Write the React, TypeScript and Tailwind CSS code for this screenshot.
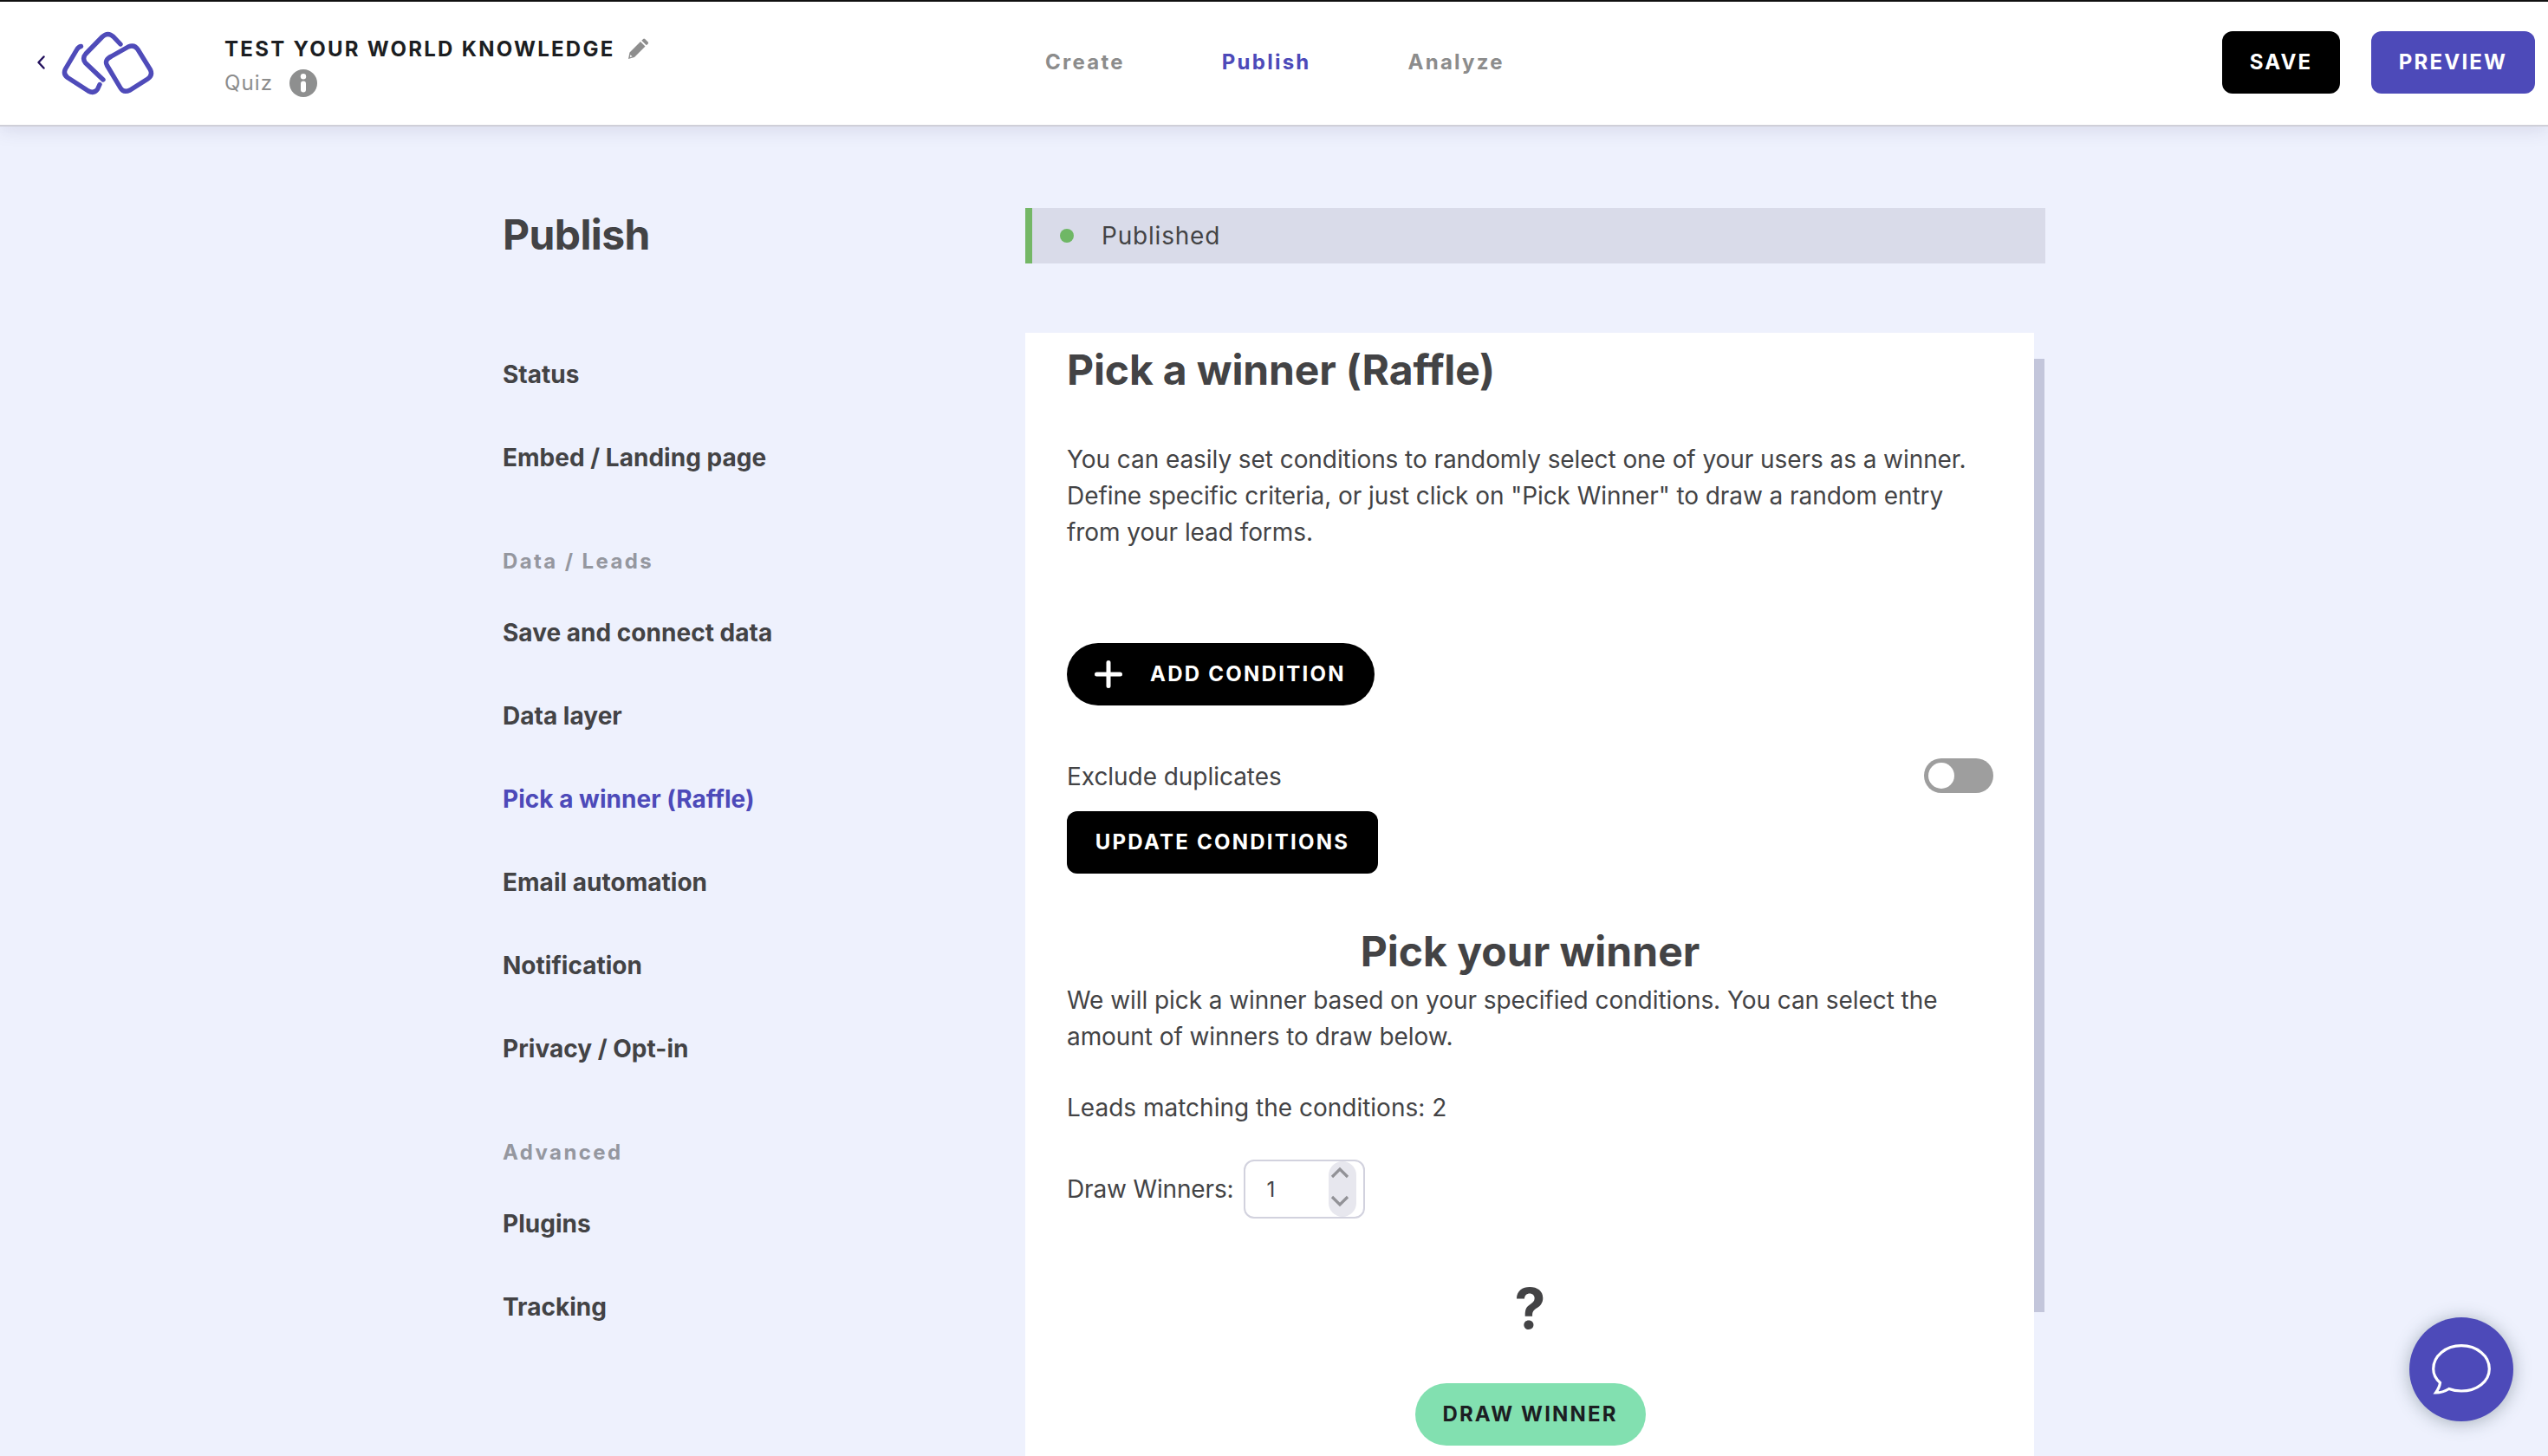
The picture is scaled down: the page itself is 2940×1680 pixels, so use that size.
const navGroups = [
  { title: '', items: ['Status', 'Embed / Landing page'] },
  {
    title: 'Data / Leads',
    items: [
      'Save and connect data',
      'Data layer',
      'Pick a winner (Raffle)',
      'Email automation',
      'Notification',
      'Privacy / Opt-in',
    ],
  },
  { title: 'Advanced', items: ['Plugins', 'Tracking'] },
];

const tabs = ['Create', 'Publish', 'Analyze'];

function Logo() {
  return (
    <svg
      width="108"
      height="76"
      viewBox="0 0 108 76"
      fill="none"
      stroke="#4f4bb9"
      strokeWidth="5.4"
      strokeLinecap="round"
      strokeLinejoin="round"
      className="ml-[19px]"
    >
      <path d="M22.5 17.5 Q19.5 18 17.5 21.5 L4.5 43.5 Q1.5 49.5 7 53.5 L31 69 Q37.5 72.5 41.5 67 L44 61.5" />
      <path d="M68 15 L60 6.5 Q53.5 0.5 47 6.5 L28 26 Q23.5 31 27.5 36.5 L48 56" />
      <path d="M57.5 29 L77 18 Q84 15 88 21 L102.5 44.5 Q105.5 51 99.5 55 L79 68 Q71.5 71.5 68 65.5 L52.5 39.5 Q49 33 57.5 29 Z" />
    </svg>
  );
}

function Header() {
  return (
    <header className="relative z-10 flex h-[146px] items-start border-t-2 border-b-2 border-t-[#111111] border-b-[#cfcfd8] bg-white pl-[43px] pr-[15px] pt-[34px] shadow-[0_4px_20px_rgba(60,60,110,0.13)]">
      <div className="flex w-[216px] shrink-0 items-start">
        <svg width="9" height="16" viewBox="0 0 9 16" className="mt-[28px] shrink-0">
          <path d="M7.5 1.5 L1.5 8 L7.5 14.5" fill="none" stroke="#22105c" strokeWidth="2.4" strokeLinecap="round" strokeLinejoin="round" />
        </svg>
        <Logo />
      </div>
      <div className="w-[947px] shrink-0">
        <div className="flex h-[40px] items-center">
          <h1 className="whitespace-nowrap pt-[2px] text-[24px] font-bold leading-[40px] tracking-[2.28px] text-[#1c1e22]">
            TEST YOUR WORLD KNOWLEDGE
          </h1>
          <svg width="25" height="25" viewBox="0 0 25 25" fill="#8e8e8e" className="ml-[14px]">
            <path d="M2.5 16.5 L15 4 L20.5 9.5 L8 22 L1 24 Z M3.3 19.3 L3 22 L5.6 21.3 Z" fillRule="evenodd" />
            <path d="M16.3 2.7 L18.2 0.9 Q19.2 0.2 20.2 1 L23.7 4.5 Q24.5 5.5 23.7 6.4 L21.8 8.2 Z" />
          </svg>
        </div>
        <div className="flex h-[40px] items-center">
          <span className="text-[24px] leading-[40px] tracking-[1.1px] text-[#8c8c8c]">Quiz</span>
          <svg width="32" height="32" viewBox="0 0 32 32" className="ml-[19px]">
            <circle cx="16" cy="16" r="16" fill="#8e8f8f" />
            <circle cx="16" cy="8.3" r="3.2" fill="#fff" />
            <rect x="13" y="13.5" width="6" height="13" rx="3" fill="#fff" />
          </svg>
        </div>
      </div>
      <nav className="flex h-[72px] items-center gap-[112px] text-[24px] font-bold tracking-[2.25px]">
        {tabs.map((tab) => (
          <a key={tab} className={tab === 'Publish' ? 'text-[#4d4ab9]' : 'text-[#8c8c8c]'}>
            {tab}
          </a>
        ))}
      </nav>
      <div className="ml-auto flex gap-[36px] text-[24px] font-bold tracking-[2.2px] text-white">
        <button className="h-[72px] w-[136px] rounded-[12px] bg-black pb-px">SAVE</button>
        <button className="h-[72px] w-[189px] rounded-[12px] bg-[#4d4ab9] pb-px">PREVIEW</button>
      </div>
    </header>
  );
}

function Sidebar() {
  return (
    <aside className="w-[603px] shrink-0 pt-[92px]">
      <h2 className="h-[146px] text-[48px] font-bold leading-[66px] tracking-[-0.6px]">Publish</h2>
      {navGroups.map((group) => (
        <div key={group.title}>
          {group.title && (
            <div className="mt-[36px] h-[70px] text-[24px] font-bold leading-[72px] tracking-[2.4px] text-[#95979f]">
              {group.title}
            </div>
          )}
          {group.items.map((item) => (
            <a
              key={item}
              className={`block h-[96px] text-[28px] font-bold leading-[96px] tracking-[0.02px] ${
                item === 'Pick a winner (Raffle)' ? 'text-[#4d4ab9]' : ''
              }`}
            >
              {item}
            </a>
          ))}
        </div>
      ))}
    </aside>
  );
}

function NumberInput() {
  return (
    <div className="ml-[12px] flex h-[68px] w-[140px] items-center justify-between rounded-[12px] border-2 border-[#d2d2de] bg-white pl-[24px] pr-[8px]">
      <span className="pt-px text-[24px]">1</span>
      <svg width="32" height="64" viewBox="0 0 32 64" fill="none" stroke="#929297" strokeWidth="3.2">
        <rect width="32" height="64" rx="16" fill="#e7e7ee" stroke="none" />
        <path d="M4 18 L13 9 L22 18" />
        <path d="M4 41 L13 50 L22 41" />
      </svg>
    </div>
  );
}

function RafflePanel() {
  return (
    <div className="flex h-[1296px]">
      <section className="w-[1164px] bg-white pl-[48px] pr-[47px] pt-[14px]">
        <h2 className="text-[48px] font-bold leading-[58px] tracking-[-0.15px]">Pick a winner (Raffle)</h2>
        <p className="mt-[53px] leading-[42px] tracking-[-0.07px]">
          You can easily set conditions to randomly select one of your users as a winner.
          <br />
          Define specific criteria, or just click on "Pick Winner" to draw a random entry
          <br />
          from your lead forms.
        </p>
        <button className="mt-[107px] flex h-[72px] w-[355px] items-center rounded-full bg-black pl-[32px] text-[24px] font-bold tracking-[2.25px] text-white">
          <svg width="32" height="32" viewBox="0 0 32 32" className="mr-[32px]">
            <path d="M2.5 16 H29.5 M16 2.5 V29.5" stroke="#fff" strokeWidth="5" strokeLinecap="round" />
          </svg>
          <span className="whitespace-nowrap pb-px">ADD CONDITION</span>
        </button>
        <div className="mt-[61px] flex h-[40px] items-center justify-between">
          <span className="pt-[2px] tracking-[-0.05px]">Exclude duplicates</span>
          <div className="flex h-[40px] w-[80px] items-center rounded-full bg-[#9e9e9e] pl-[5px]">
            <div className="h-[30px] w-[30px] rounded-full bg-white"></div>
          </div>
        </div>
        <button className="mt-[21px] block h-[72px] w-[359px] whitespace-nowrap rounded-[12px] bg-black pb-px text-[24px] font-bold tracking-[2.25px] text-white">
          UPDATE CONDITIONS
        </button>
        <h2 className="mt-[55px] text-center text-[48px] font-bold leading-[70px]">Pick your winner</h2>
        <p className="leading-[42px] tracking-[-0.07px]">
          We will pick a winner based on your specified conditions. You can select the
          <br />
          amount of winners to draw below.
        </p>
        <p className="mt-[40px] leading-[42px]">Leads matching the conditions: 2</p>
        <div className="mt-[39px] flex h-[68px] items-center">
          <span className="tracking-[-0.15px]">Draw Winners:</span>
          <NumberInput />
        </div>
        <div className="mt-[64px] text-center text-[64px] font-bold leading-[80px]">?</div>
        <button className="mx-auto mt-[46px] block h-[72px] w-[266px] whitespace-nowrap rounded-full bg-[#82e0b0] pb-px text-[24px] font-bold tracking-[2.15px] text-[#1c1e22]">
          DRAW WINNER
        </button>
      </section>
      <div className="mt-[30px] h-[1100px] w-[12px] bg-[#c3c6db]"></div>
    </div>
  );
}

export default function App() {
  return (
    <div className="h-[1680px] w-[2940px] overflow-hidden bg-[#eef1fd] font-['Inter',sans-serif] text-[28px] text-[#434345]">
      <Header />
      <div className="flex pl-[580px]">
        <Sidebar />
        <main className="w-[1177px] pt-[94px]">
          <div className="mb-[80px] flex h-[64px] items-center border-l-8 border-[#74b766] bg-[#d9dbe9] pl-[32px]">
            <span className="h-[16px] w-[16px] rounded-full bg-[#6fb765]"></span>
            <span className="ml-[32px] tracking-[0.8px]">Published</span>
          </div>
          <RafflePanel />
        </main>
      </div>
      <div className="absolute left-[2780px] top-[1520px] flex h-[120px] w-[120px] items-center justify-center rounded-full bg-[#4d4ab9] shadow-[0_2px_20px_rgba(60,80,90,0.4)]">
        <svg width="68" height="58" viewBox="0 0 68 58" fill="none" stroke="#fff" strokeWidth="3.2">
          <path d="M9.5 44.5 C4.5 40 1.7 34.5 1.7 28.5 C1.7 13.5 16 1.7 34 1.7 C52 1.7 66.3 13.5 66.3 28.5 C66.3 43 52 54 34 54 C29 54 24 53.2 19.8 51.5 C15 54.5 9.5 56 4.5 56 C7 52.5 9 48.5 9.5 44.5 Z" />
        </svg>
      </div>
    </div>
  );
}
